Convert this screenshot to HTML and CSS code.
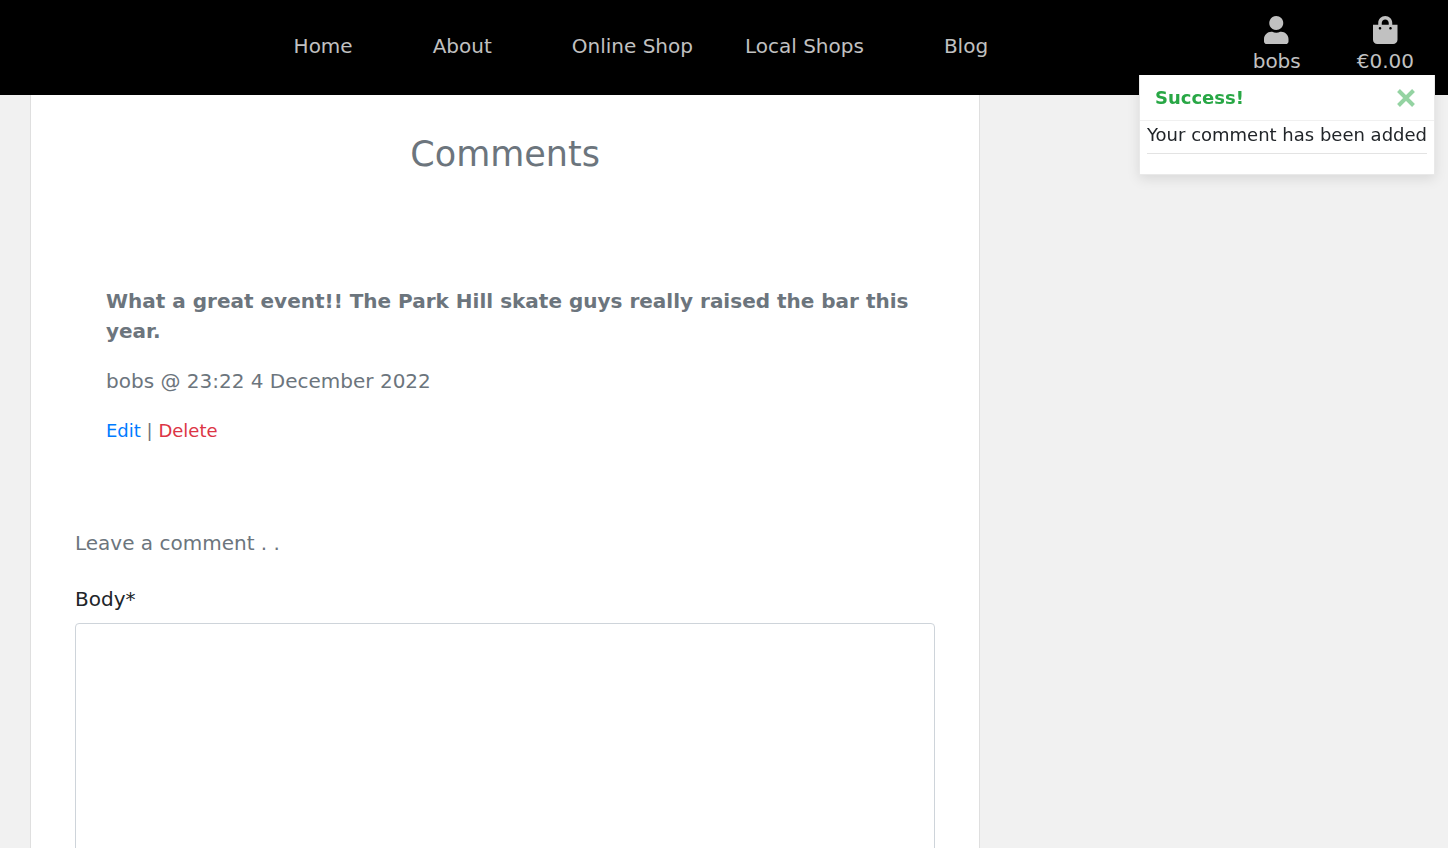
FILE: index.html
```html
<!DOCTYPE html>
<html lang="en">
<head>
<meta charset="utf-8">
<meta name="viewport" content="width=device-width, initial-scale=1">
<title>Comments</title>
<link rel="stylesheet" href="styles.css">
</head>
<body>
<header class="site-header">
  <nav class="main-nav">
    <a href="#">Home</a>
    <a href="#">About</a>
    <span class="shop-links">
      <a href="#">Online Shop</a>
      <a href="#">Local Shops</a>
    </span>
    <a href="#">Blog</a>
  </nav>
  <div class="user-nav">
    <a href="#" class="user-link">
      <svg class="icon" viewBox="0 0 448 512" aria-hidden="true"><path d="M224 256c70.700 0 128-57.300 128-128S294.700 0 224 0 96 57.300 96 128s57.300 128 128 128zm89.600 32h-16.700c-22.200 10.200-46.900 16-72.900 16s-50.600-5.800-72.900-16h-16.700C60.200 288 0 348.200 0 422.400V464c0 26.500 21.500 48 48 48h352c26.500 0 48-21.500 48-48v-41.600c0-74.200-60.200-134.400-134.400-134.400z"/></svg>
      <span>bobs</span>
    </a>
    <a href="#" class="user-link">
      <svg class="icon" viewBox="0 0 448 512" aria-hidden="true"><path d="M352 160v-32C352 57.420 294.579 0 224 0 153.420 0 96 57.420 96 128v32H0v272c0 44.183 35.817 80 80 80h288c44.183 0 80-35.817 80-80V160h-96zm-192-32c0-35.290 28.710-64 64-64s64 28.710 64 64v32H160v-32zm160 120c-13.255 0-24-10.745-24-24s10.745-24 24-24 24 10.745 24 24-10.745 24-24 24zm-192 0c-13.255 0-24-10.745-24-24s10.745-24 24-24 24 10.745 24 24-10.745 24-24 24z"/></svg>
      <span>€0.00</span>
    </a>
  </div>
</header>

<div class="toast" role="status">
  <div class="toast-header">
    <strong>Success!</strong>
    <button type="button" class="toast-close" aria-label="Close">
      <svg viewBox="0 0 20 20" aria-hidden="true"><path d="M2.500 2.500l15 15M17.500 2.500l-15 15"/></svg>
    </button>
  </div>
  <div class="toast-body">
    <p>Your comment has been added</p>
  </div>
</div>

<main class="card">
  <h1>Comments</h1>
  <article class="comment">
    <p class="comment-text">What a great event!! The Park Hill skate guys really raised the bar this year.</p>
    <p class="comment-meta">bobs @ 23:22 4 December 2022</p>
    <p class="comment-actions"><a href="#" class="edit">Edit</a> | <a href="#" class="delete">Delete</a></p>
  </article>
  <form class="comment-form">
    <p class="form-intro">Leave a comment . .</p>
    <label for="body">Body*</label>
    <textarea id="body" name="body" rows="10"></textarea>
  </form>
</main>
</body>
</html>
```
FILE: styles.css
```css
* {
  box-sizing: border-box;
}

html {
  scrollbar-width: none;
}

body {
  margin: 0;
  min-height: 100vh;
  display: flex;
  flex-direction: column;
  background: #f1f1f1;
  color: #212529;
  font-family: Verdana, "DejaVu Sans", sans-serif;
  font-size: 20px;
  line-height: 30px;
}

h1,
p {
  margin: 0;
}

a {
  text-decoration: none;
}

.site-header {
  display: flex;
  justify-content: space-between;
  min-height: 95px;
  padding: 16px 34px 19px 20%;
  background: #000;
}

.site-header a {
  color: #c1c1c1;
  white-space: nowrap;
}

.main-nav {
  display: flex;
  align-items: center;
  gap: 80px;
  padding-left: 4px;
}

.shop-links {
  display: flex;
  gap: 52px;
}

.user-nav {
  display: flex;
  gap: 56px;
}

.user-link {
  display: flex;
  flex-direction: column;
  align-items: center;
}

.icon {
  height: 30px;
  padding-bottom: 2px;
  fill: currentColor;
}

.toast {
  position: fixed;
  top: 75px;
  right: 13px;
  background: #fff;
  border: 1px solid #e9e9e9;
  border-top: 0;
  box-shadow: 0 4px 12px rgba(0, 0, 0, 0.1);
  font-size: 18px;
  line-height: 27px;
}

.toast-header {
  display: flex;
  align-items: center;
  justify-content: space-between;
  height: 46px;
  padding: 0 18px 0 15px;
  border-bottom: 1px solid #f0f0f0;
  color: #28a745;
}

.toast-close {
  width: 20px;
  height: 20px;
  padding: 0;
  border: 0;
  background: none;
  color: #94d3a2;
}

.toast-close svg {
  display: block;
  fill: none;
  stroke: currentColor;
  stroke-width: 4;
}

.toast-body {
  padding: 0 7px 20px;
}

.toast-body p {
  padding-bottom: 5px;
  border-bottom: 1px solid #e3e3e3;
}

.card {
  flex: 1 0 auto;
  width: calc(66.666% - 15px);
  margin-left: 30px;
  padding: 36px 44px;
  background: #fff;
  border: solid #dfdfdf;
  border-width: 0 1px;
  color: #6c757d;
}

h1 {
  font-size: 35px;
  font-weight: 400;
  line-height: 46px;
  text-align: center;
}

.comment {
  padding: 109px 10px 0 31px;
}

.comment-text {
  font-weight: 700;
}

.comment-meta {
  padding: 20px 0;
}

.comment-actions {
  font-size: 18px;
}

.edit {
  color: #007bff;
}

.delete {
  color: #dc3545;
}

.comment-form {
  display: flex;
  flex-direction: column;
  padding-top: 82px;
}

.comment-form label {
  padding: 26px 0 9px;
  color: #212529;
}

.comment-form textarea {
  min-height: 324px;
  padding: 6px 12px;
  border: 1px solid #ced4da;
  border-radius: 4px;
  background: #fff;
  color: #495057;
  font: inherit;
  resize: none;
}
```
